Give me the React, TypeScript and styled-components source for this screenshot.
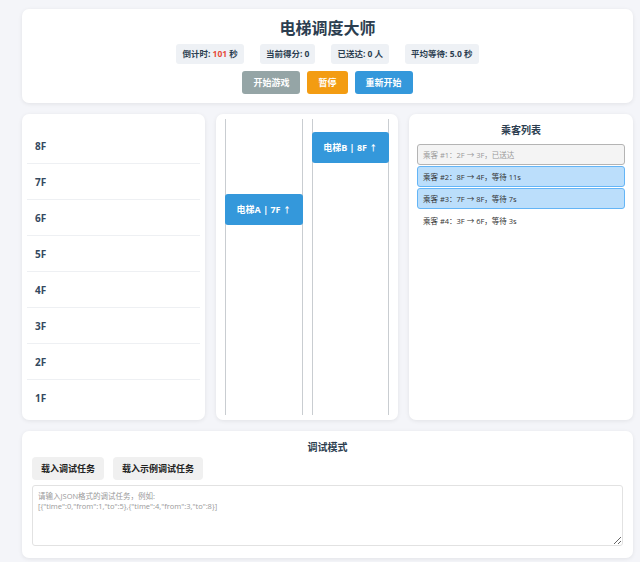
import styled, { createGlobalStyle } from "styled-components";

const GlobalStyle = createGlobalStyle`
  body {
    margin: 0;
    background: #f4f5f9;
    font-family: "Open Sans", "Noto Sans CJK SC", sans-serif;
    color: #2c3e50;
  }
`;

const floors = ["8F", "7F", "6F", "5F", "4F", "3F", "2F", "1F"];

const elevators = [
  { name: "电梯A", floor: "7F", dir: "↑", top: 75 },
  { name: "电梯B", floor: "8F", dir: "↑", top: 13 },
];

type PState = "done" | "riding" | "waiting";

const passengers: { text: string; state: PState }[] = [
  { text: "乘客 #1：2F → 3F，已送达", state: "done" },
  { text: "乘客 #2：8F → 4F，等待 11s", state: "riding" },
  { text: "乘客 #3：7F → 8F，等待 7s", state: "riding" },
  { text: "乘客 #4：3F → 6F，等待 3s", state: "waiting" },
];

const App = () => {
  return (
    <>
      <GlobalStyle />
      <Page>
        <HeaderCard>
          <Title>电梯调度大师</Title>
          <StatsRow>
            <Stat>
              倒计时: <Countdown>101</Countdown> 秒
            </Stat>
            <Stat>当前得分: 0</Stat>
            <Stat>已送达: 0 人</Stat>
            <Stat>平均等待: 5.0 秒</Stat>
          </StatsRow>
          <ButtonRow>
            <ActionButton $bg="#95a5a6">开始游戏</ActionButton>
            <ActionButton $bg="#f39c12">暂停</ActionButton>
            <ActionButton $bg="#3498db">重新开始</ActionButton>
          </ButtonRow>
        </HeaderCard>

        <MainRow>
          <FloorPanel>
            {floors.map((f) => (
              <FloorRow key={f}>{f}</FloorRow>
            ))}
          </FloorPanel>

          <ShaftPanel>
            {elevators.map((e) => (
              <Shaft key={e.name}>
                <Car style={{ top: e.top }}>
                  {e.name} | {e.floor} <Arrow>{e.dir}</Arrow>
                </Car>
              </Shaft>
            ))}
          </ShaftPanel>

          <PassengerPanel>
            <PanelTitle>乘客列表</PanelTitle>
            <PassengerList>
              {passengers.map((p) => (
                <PassengerItem key={p.text} $state={p.state}>
                  {p.text}
                </PassengerItem>
              ))}
            </PassengerList>
          </PassengerPanel>
        </MainRow>

        <DebugCard>
          <PanelTitle>调试模式</PanelTitle>
          <DebugButtons>
            <DebugButton>载入调试任务</DebugButton>
            <DebugButton>载入示例调试任务</DebugButton>
          </DebugButtons>
          <DebugInput
            placeholder={
              '请输入JSON格式的调试任务，例如:\n[{"time":0,"from":1,"to":5},{"time":4,"from":3,"to":8}]'
            }
          />
        </DebugCard>
      </Page>
    </>
  );
};

const Page = styled.div`
  display: flex;
  flex-direction: column;
  gap: 11px;
  padding: 9px 7px 4px 22px;
`;

const Card = styled.div`
  background: #fff;
  border-radius: 7px;
  box-shadow: 0 1px 4px rgba(0, 0, 0, 0.08);
`;

const HeaderCard = styled(Card)`
  padding: 9px 10px 9px;
  text-align: center;
`;

const Title = styled.h1`
  margin: 0;
  font-size: 16px;
  line-height: 20px;
  font-weight: 700;
  color: #2c3e50;
`;

const StatsRow = styled.div`
  display: flex;
  justify-content: center;
  gap: 16px;
  margin-top: 6px;
`;

const Stat = styled.div`
  background: #eef1f5;
  border-radius: 3px;
  padding: 0 6px;
  height: 20px;
  line-height: 20px;
  font-size: 8.5px;
  font-weight: 700;
  color: #2c3e50;
`;

const Countdown = styled.span`
  color: #e74c3c;
`;

const ButtonRow = styled.div`
  display: flex;
  justify-content: center;
  gap: 7px;
  margin-top: 7px;
`;

const ActionButton = styled.button<{ $bg: string }>`
  background: ${(p) => p.$bg};
  color: #fff;
  border: none;
  border-radius: 3px;
  height: 23px;
  padding: 0 11px;
  font-family: inherit;
  font-size: 9px;
  font-weight: 700;
`;

const MainRow = styled.div`
  display: flex;
  gap: 11px;
  height: 306px;
`;

const FloorPanel = styled(Card)`
  width: 183px;
  box-sizing: border-box;
  padding: 14px 5px 4px;
  display: flex;
  flex-direction: column;
`;

const FloorRow = styled.div`
  height: 36px;
  box-sizing: border-box;
  display: flex;
  align-items: center;
  padding-left: 8px;
  font-size: 10px;
  font-weight: 700;
  color: #34495e;
  border-bottom: 1.5px solid #eef0f3;

  &:last-child {
    border-bottom: none;
  }
`;

const ShaftPanel = styled(Card)`
  width: 182px;
  box-sizing: border-box;
  padding: 5px 9px 5px 9px;
  display: flex;
  gap: 9px;
`;

const Shaft = styled.div`
  position: relative;
  width: 78px;
  box-sizing: border-box;
  border-left: 1.5px solid #c9cdd1;
  border-right: 1.5px solid #c9cdd1;
`;

const Car = styled.div`
  position: absolute;
  left: -1px;
  right: -1px;
  height: 31px;
  background: #3498db;
  border-radius: 3px;
  color: #fff;
  font-size: 9px;
  font-weight: 700;
  display: flex;
  align-items: center;
  justify-content: center;
  white-space: pre;
`;

const Arrow = styled.span`
  font-size: 8px;
`;

const PassengerPanel = styled(Card)`
  flex: 1;
  padding: 8px 8px;
`;

const PanelTitle = styled.div`
  text-align: center;
  font-size: 10px;
  font-weight: 700;
  line-height: 16px;
  color: #2c3e50;
`;

const PassengerList = styled.div`
  display: flex;
  flex-direction: column;
  gap: 1px;
  margin-top: 6px;
`;

const itemStyles: Record<PState, string> = {
  done: "background: #f4f4f4; border-color: #b4b4b4; color: #999;",
  riding: "background: #bbdefb; border-color: #64b5f6; color: #333;",
  waiting: "background: transparent; border-color: transparent; color: #333;",
};

const PassengerItem = styled.div<{ $state: PState }>`
  height: 21px;
  box-sizing: border-box;
  display: flex;
  align-items: center;
  padding: 0 5px;
  border: 1.5px solid;
  border-radius: 3px;
  font-size: 7.5px;
  ${(p) => itemStyles[p.$state]}
`;

const DebugCard = styled(Card)`
  padding: 8px 10px 12px;
`;

const DebugButtons = styled.div`
  display: flex;
  gap: 9px;
  margin-top: 2px;
`;

const DebugButton = styled.button`
  background: #f0f0f0;
  border: none;
  border-radius: 4px;
  height: 23px;
  padding: 0 9px;
  font-family: inherit;
  font-size: 9px;
  font-weight: 700;
  color: #222;
`;

const DebugInput = styled.textarea`
  display: block;
  width: 100%;
  box-sizing: border-box;
  height: 61px;
  margin-top: 5px;
  border: 1px solid #e2e2e2;
  border-radius: 3px;
  padding: 5px 5px;
  font-family: inherit;
  font-size: 7.5px;
  line-height: 10px;

  &::placeholder {
    color: #999;
  }
`;

export default App;
